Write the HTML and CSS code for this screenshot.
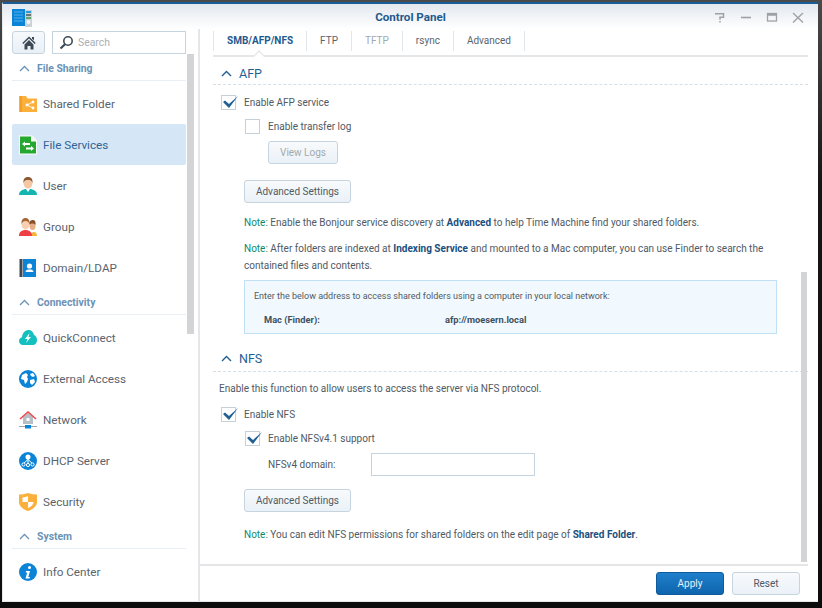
FILE: index.html
```html
<!DOCTYPE html>
<html lang="en">

<head>
    <meta charset="UTF-8">
    <title>Control Panel</title>
    <link rel="stylesheet" href="styles.css">
</head>

<body>
    <main class="window">
        <header class="titlebar">
            <svg class="app__icon" width="20" height="18" viewBox="0 0 20 18">
                <rect x="0" y="0" width="13" height="17" fill="#0b84d8"/>
                <path d="M2 3h9M2 6h9M2 9h9M2 12h9" stroke="#4fb2ee" stroke-width="1"/>
                <rect x="13" y="1" width="7" height="17" fill="#c9d2d8"/>
                <path d="M14 3h5" stroke="#2a9bd8" stroke-width="2"/>
                <path d="M14 6h5" stroke="#4a5a50" stroke-width="1.5"/>
                <path d="M14 9h5" stroke="#3a9a4a" stroke-width="1.5"/>
                <circle cx="16.5" cy="13" r="2" fill="#f2f4f6"/>
            </svg>
            <h1>Control Panel</h1>
            <div class="titlebar__btns">
                <svg width="14" height="14" viewBox="0 0 14 14"><path d="M2 2.700h8.500v3.600h-3.500v2.500" fill="none" stroke="#9ea2a6" stroke-width="1.500"/><path d="M7 10v1.500" stroke="#9ea2a6" stroke-width="1.500"/></svg>
                <svg width="14" height="14" viewBox="0 0 14 14"><path d="M2 6.500h10" stroke="#9ea2a6" stroke-width="1.600"/></svg>
                <svg width="14" height="14" viewBox="0 0 14 14"><rect x="2.500" y="2.500" width="9" height="7.500" fill="none" stroke="#9ea2a6" stroke-width="1.300"/><path d="M2 3.500h10" stroke="#9ea2a6" stroke-width="2.500"/></svg>
                <svg width="14" height="14" viewBox="0 0 14 14"><path d="M2 2l10 9.500M12 2L2 11.500" stroke="#9ea2a6" stroke-width="1.400"/></svg>
            </div>
        </header>

        <div class="body">
            <aside class="sidebar">
                <div class="sidebar__top">
                    <button class="home">
                        <svg width="14" height="14" viewBox="0 0 14 14"><path d="M10 1h2v3.500l-2-2z" fill="#3d4a55"/><path d="M7 .5L.3 7l1 1L7 2.500 12.700 8l1-1z" fill="#3d4a55"/><path d="M2.500 8.500L7 4l4.500 4.500V13.500H8.500V10h-3v3.500h-3z" fill="#3d4a55"/></svg>
                    </button>
                    <div class="search">
                        <svg width="15" height="15" viewBox="0 0 15 15"><circle cx="9" cy="6" r="4.200" fill="none" stroke="#3d4a55" stroke-width="1.600"/><path d="M6 9.200L1.500 13.500" stroke="#3d4a55" stroke-width="2.200"/></svg>
                        <span>Search</span>
                    </div>
                </div>
                <nav class="menu">
                    <div class="menu__group">
                        <svg width="11" height="7" viewBox="0 0 11 7"><path d="M1 6l4.500-4.500L10 6" fill="none" stroke="#6a93b8" stroke-width="1.300"/></svg>
                        <span>File Sharing</span>
                    </div>
                    <a class="menu__item">
                        <svg width="18" height="18" viewBox="0 0 18 18"><path d="M0 1h7l1.500 2.500H18V17H0z" fill="#fbb03b"/><rect x="1" y="1" width="2" height="16" fill="#f59d20"/><circle cx="8" cy="10" r="1.400" fill="#fff"/><circle cx="14" cy="7" r="1.400" fill="#fff"/><circle cx="14" cy="13" r="1.400" fill="#fff"/><path d="M14 7l-6 3 6 3" fill="none" stroke="#fff" stroke-width=".9"/></svg>
                        Shared Folder
                    </a>
                    <a class="menu__item menu__item--on">
                        <svg width="18" height="20" viewBox="0 0 18 20"><path d="M0 .5h13l5 5V19.500H0z" fill="#fff"/><path d="M1 1.500h11l5 5V18.500H1z" fill="#25a82f"/><path d="M12 1.500l5 5h-5z" fill="#fff"/><path d="M3 9l3-2.500V8h5v2H6v1.500zM15 13.500L12 11v1.500H7v2h5V16z" fill="#fff"/></svg>
                        File Services
                    </a>
                    <a class="menu__item">
                        <svg width="18" height="18" viewBox="0 0 18 18"><path d="M0 18c0-4 3-5 6-6h6c3 1 6 2 6 6z" fill="#14b5b0"/><path d="M7 12h4l-2 3z" fill="#fff"/><ellipse cx="9" cy="6" rx="4.500" ry="5.500" fill="#f5c6a2"/><path d="M4.500 6C4 1.500 6.500 0 9 0s5 1.500 4.500 6C13 3.500 11 3 9 3S5 3.500 4.500 6z" fill="#8b5a34"/></svg>
                        User
                    </a>
                    <a class="menu__item">
                        <svg width="18" height="18" viewBox="0 0 18 18"><path d="M12 18c0-3 1-4 3-4s3 2 3 4z" fill="#fbb03b"/><ellipse cx="13.500" cy="8" rx="3" ry="4" fill="#e6ad86"/><path d="M10 7c0-4 2-5 4-5s3 2 2.500 5C15 5 12 5 10 7z" fill="#8b4f2a"/><path d="M0 18c0-4 2-5 5-6h3c3 1 5 2 5 6z" fill="#ee3f45"/><ellipse cx="6.500" cy="6.500" rx="4" ry="5" fill="#f8cfb0"/><path d="M2.500 6C2 1.500 4.500 0 6.500 0s4.500 1.500 4 6C10 4 8 3 6.500 3S3 4 2.500 6z" fill="#a5673a"/></svg>
                        Group
                    </a>
                    <a class="menu__item">
                        <svg width="18" height="18" viewBox="0 0 18 18"><rect x="0.500" y="0" width="3" height="18" fill="#3d4a55"/><rect x="4" y="0" width="13" height="18" fill="#0b84d8"/><circle cx="10.500" cy="7" r="2.600" fill="#fff"/><path d="M6.500 13c0-2 2-2.500 4-2.500s4 .5 4 2.500z" fill="#fff"/></svg>
                        Domain/LDAP
                    </a>
                    <div class="menu__group">
                        <svg width="11" height="7" viewBox="0 0 11 7"><path d="M1 6l4.500-4.500L10 6" fill="none" stroke="#6a93b8" stroke-width="1.300"/></svg>
                        <span>Connectivity</span>
                    </div>
                    <a class="menu__item">
                        <svg width="18" height="16" viewBox="0 0 18 16"><path d="M4 15C1.500 15 0 13 0 11s1.500-3.500 3-3.700C3.500 3 6 0 9.500 0c3 0 5 2 5.500 5 2 .5 3 3 3 5 0 3-2 5-4.500 5z" fill="#14bfc0"/><path d="M10.500 3L6 9h2.500L7 13l5-6H9.500z" fill="#fff"/></svg>
                        QuickConnect
                    </a>
                    <a class="menu__item">
                        <svg width="18" height="18" viewBox="0 0 18 18"><circle cx="9" cy="9" r="9" fill="#0b84d8"/><path d="M3 5l4-2 2 2-1 2 1 2-1 3-2 2-1-4-3-1zM11 4l3-1 2 3-2 1-2-1zM11 10l4-1 1 3-3 3-2-2z" fill="#fff"/></svg>
                        External Access
                    </a>
                    <a class="menu__item">
                        <svg width="18" height="18" viewBox="0 0 18 18"><path d="M4 6l5-4 5 4v7H4z" fill="#b6bfc6"/><path d="M1 8l8-7 8 7" fill="none" stroke="#ee4b50" stroke-width="1.600"/><rect x="7.500" y="7" width="3" height="3" fill="#fff"/><path d="M0 15.500h18" stroke="#9aa8b2"/><rect x="6" y="14" width="6" height="3.500" fill="#0b84d8"/></svg>
                        Network
                    </a>
                    <a class="menu__item">
                        <svg width="18" height="18" viewBox="0 0 18 18"><circle cx="9" cy="9" r="9" fill="#0b84d8"/><circle cx="9" cy="5" r="2.500" fill="#fff"/><path d="M9 5v7M9 7.500L4.500 11.500M9 7.500l4.500 4" stroke="#fff"/><circle cx="4.500" cy="12.500" r="1.600" fill="#0b84d8" stroke="#fff"/><circle cx="9" cy="13" r="1.600" fill="#0b84d8" stroke="#fff"/><circle cx="13.500" cy="12.500" r="1.600" fill="#0b84d8" stroke="#fff"/></svg>
                        DHCP Server
                    </a>
                    <a class="menu__item">
                        <svg width="18" height="18" viewBox="0 0 18 18"><path d="M0 1.500C3 1.500 6 1 9 0c3 1 6 1.500 9 1.500V9c0 4-4 7.500-9 9-5-1.500-9-5-9-9z" fill="#fbb03b"/><path d="M9 3v6H3.500V4.500C5.500 4.300 7 4 9 3zM9 9h5.500c0 2.500-2.500 5-5.500 6z" fill="#fff"/></svg>
                        Security
                    </a>
                    <div class="menu__group">
                        <svg width="11" height="7" viewBox="0 0 11 7"><path d="M1 6l4.500-4.500L10 6" fill="none" stroke="#6a93b8" stroke-width="1.300"/></svg>
                        <span>System</span>
                    </div>
                    <a class="menu__item">
                        <svg width="18" height="18" viewBox="0 0 18 18"><circle cx="9" cy="9" r="9" fill="#0b84d8"/><circle cx="10.500" cy="4.500" r="1.500" fill="#fff"/><path d="M7 8h4l-1.700 6H11l-.5 1.500H6.500L8.200 9.500H6.700z" fill="#fff"/></svg>
                        Info Center
                    </a>
                </nav>
                <div class="sidebar__scroll"></div>
            </aside>

            <section class="main">
                <div class="tabs">
                    <a class="tab tab--on">SMB/AFP/NFS</a>
                    <a class="tab">FTP</a>
                    <a class="tab tab--off">TFTP</a>
                    <a class="tab">rsync</a>
                    <a class="tab">Advanced</a>
                </div>

                <div class="content">
                    <div class="sec__head">
                        <svg width="11" height="7" viewBox="0 0 11 7"><path d="M1 6l4.500-4.500L10 6" fill="none" stroke="#1f5f94" stroke-width="1.400"/></svg>
                        <h2>AFP</h2>
                    </div>
                    <div class="sec sec--afp">
                        <label class="check"><i class="box box--on"></i>Enable AFP service</label>
                        <label class="check check--sub"><i class="box"></i>Enable transfer log</label>
                        <button class="btn btn--off btn--logs">View Logs</button>
                        <button class="btn btn--adv">Advanced Settings</button>
                        <p class="note"><em>Note:</em> Enable the Bonjour service discovery at <b>Advanced</b> to help Time Machine find your shared folders.</p>
                        <p class="note note--two"><em>Note:</em> After folders are indexed at <b>Indexing Service</b> and mounted to a Mac computer, you can use Finder to search the contained files and contents.</p>
                        <div class="addr">
                            <p>Enter the below address to access shared folders using a computer in your local network:</p>
                            <div class="addr__row"><b>Mac (Finder):</b><b>afp://moesern.local</b></div>
                        </div>
                    </div>

                    <div class="sec__head sec__head--nfs">
                        <svg width="11" height="7" viewBox="0 0 11 7"><path d="M1 6l4.500-4.500L10 6" fill="none" stroke="#1f5f94" stroke-width="1.400"/></svg>
                        <h2>NFS</h2>
                    </div>
                    <div class="sec sec--nfs">
                        <p class="desc">Enable this function to allow users to access the server via NFS protocol.</p>
                        <label class="check"><i class="box box--on"></i>Enable NFS</label>
                        <label class="check check--sub"><i class="box box--on"></i>Enable NFSv4.1 support</label>
                        <div class="field"><span>NFSv4 domain:</span><input type="text"></div>
                        <button class="btn btn--adv">Advanced Settings</button>
                        <p class="note"><em>Note:</em> You can edit NFS permissions for shared folders on the edit page of <b>Shared Folder</b>.</p>
                    </div>
                </div>

                <div class="content__scroll"></div>

                <footer class="footer">
                    <button class="btn btn--apply">Apply</button>
                    <button class="btn btn--reset">Reset</button>
                </footer>
            </section>
        </div>
    </main>
</body>

</html>
```

FILE: styles.css
```css
* {
    box-sizing: border-box;
}

body {
    margin: 0;
    height: 608px;
    overflow: hidden;
    padding: 2px 4px 0 2px;
    background: linear-gradient(#4a4a4a, #161616 30%, #0c0c0c);
    font-family: Roboto, "Liberation Sans", sans-serif;
    font-size: 10px;
    color: #505a64;
}

.window {
    height: 600px;
    display: flex;
    flex-direction: column;
    background: #fff;
    border-top: 2px solid #1a5c96;
    border-left: 1px solid #e6e9ec;
    border-bottom: 1px solid #e6e9ec;
}

.titlebar {
    flex: none;
    height: 25px;
    padding-top: 1px;
    display: flex;
    align-items: center;
    justify-content: center;
    position: relative;
    background: linear-gradient(#e3e8ef, #fff);
}

.titlebar h1 {
    margin: 0;
    font-size: 11.6px;
    font-weight: 700;
    color: #1f5a8e;
}

.app__icon {
    position: absolute;
    left: 9px;
    top: 5px;
}

.titlebar__btns {
    position: absolute;
    right: 13px;
    top: 7px;
    display: flex;
    gap: 12px;
}

.body {
    flex: 1;
    display: flex;
    min-height: 0;
}

.sidebar {
    flex: none;
    width: 197px;
    padding-left: 9px;
    border-right: 2px solid #e4e6e9;
    position: relative;
}

.sidebar__top {
    display: flex;
    gap: 7px;
    height: 26px;
    width: 174px;
    padding-top: 2px;
}

.home {
    width: 33px;
    height: 23px;
    padding: 0;
    display: flex;
    align-items: center;
    justify-content: center;
    background: linear-gradient(#f6f9fc, #e8f0f6);
    border: 1px solid #c6d4df;
    border-radius: 3px;
}

.search {
    flex: 1;
    height: 23px;
    display: flex;
    align-items: center;
    gap: 4px;
    padding-left: 6px;
    border: 1px solid #c6d4df;
    color: #a9b0b6;
    font-size: 10.4px;
}

.menu {
    width: 174px;
}

.menu__group {
    height: 26px;
    margin: 1px 0 2px;
    display: flex;
    align-items: center;
    gap: 7px;
    padding: 1px 0 0 7px;
    border-bottom: 1px solid #e9eff5;
    color: #6a93b8;
    font-size: 10.4px;
    font-weight: 700;
}

.menu__group:first-child {
    margin-top: 0;
}

.menu__item {
    height: 41px;
    display: flex;
    align-items: center;
    padding-left: 7px;
    font-size: 11.7px;
    color: #5a646e;
    border-radius: 2px;
}

.menu__item svg {
    flex: none;
    margin-right: 6px;
}

.menu__item--on {
    background: #d5e6f7;
    color: #2f6494;
}

.sidebar__scroll {
    position: absolute;
    left: 184px;
    top: 25px;
    width: 7px;
    height: 280px;
    background: #d2d4d6;
}

.main {
    flex: 1;
    min-width: 0;
    position: relative;
    display: flex;
    flex-direction: column;
}

.tabs {
    flex: none;
    display: flex;
    height: 28px;
    margin: 0 10px 0 13px;
    padding-top: 2px;
    border-bottom: 2px solid #e4e6e8;
    position: relative;
}

.tabs::after {
    content: "";
    position: absolute;
    left: 42px;
    top: 23px;
    width: 7px;
    height: 7px;
    background: #fff;
    border-top: 1px solid #e0e2e4;
    border-left: 1px solid #e0e2e4;
    transform: rotate(45deg);
}

.tab {
    height: 20px;
    padding: 0 13px;
    line-height: 20px;
    color: #5a646e;
    border-right: 1px solid #dfe6ec;
}

.tab:first-child {
    border-left: 1px solid #dfe6ec;
}

.tab--on {
    font-weight: 700;
    color: #1f5a8e;
}

.tab--off {
    color: #a3a9ae;
}

.content {
    flex: 1;
    margin-right: 10px;
    min-height: 0;
    overflow: hidden;
}

.sec__head {
    height: 28px;
    margin-left: 13px;
    padding: 5px 0 0 8px;
    display: flex;
    align-items: center;
    gap: 7px;
    border-bottom: 1px dashed #d4dfe8;
}

.sec__head--nfs {
    height: 32px;
    margin-top: 6px;
}

.sec__head h2 {
    margin: 0;
    font-size: 12.5px;
    font-weight: 400;
    color: #1f5f94;
}

.sec {
    display: flex;
    flex-direction: column;
    align-items: flex-start;
    padding-left: 21px;
}

.sec--afp {
    padding-top: 10px;
}

.sec--nfs {
    padding-top: 11px;
}

.check {
    display: flex;
    align-items: center;
    gap: 8px;
    height: 15px;
    margin-bottom: 9px;
}

.check--sub {
    margin-left: 24px;
    margin-bottom: 7px;
}

.box {
    flex: none;
    width: 15px;
    height: 15px;
    border: 1px solid #c6d0d8;
    position: relative;
}

.box--on::after {
    content: "";
    position: absolute;
    left: 0;
    top: 0;
    width: 17px;
    height: 13px;
    background: #1f5f94;
    clip-path: polygon(1px 6px, 3px 4.5px, 7px 8px, 16px 0, 7px 12px);
}

.btn {
    font: inherit;
    color: #505a64;
    background: linear-gradient(#f8fafc, #eaf1f7);
    border: 1px solid #c6d4df;
    border-radius: 3px;
    padding: 0;
}

.btn--adv {
    width: 107px;
    height: 23px;
    margin-left: 23px;
}

.btn--logs {
    width: 70px;
    height: 23px;
    margin: 0 0 16px 47px;
}

.btn--off {
    color: #a3a9ae;
}

.note {
    margin: 11px 0 0 23px;
    width: 533px;
    line-height: 17px;
}

.note--two {
    margin-top: 9px;
}

.sec--nfs .note {
    margin-top: 14px;
}

.note em {
    font-style: normal;
    color: #0d8a6a;
}

.note b {
    color: #1a4f80;
}

.addr {
    width: 533px;
    height: 54px;
    margin: 6px 0 0 23px;
    padding: 9px;
    background: #f1f9fe;
    border: 1px solid #bfe0f5;
    font-size: 9px;
}

.addr p {
    margin: 0;
    line-height: 12px;
}

.addr__row {
    display: flex;
    margin: 12px 0 0 10px;
    font-size: 9.3px;
    color: #40505e;
}

.addr__row b:first-child {
    width: 181px;
}

.desc {
    margin: 0 0 12px -2px;
    line-height: 12px;
}

.field {
    display: flex;
    align-items: center;
    margin: 0 0 13px 47px;
    height: 23px;
}

.field span {
    width: 103px;
}

.field input {
    width: 164px;
    height: 23px;
    border: 1px solid #c6d4df;
}

.content__scroll {
    position: absolute;
    left: 601px;
    top: 243px;
    width: 6px;
    height: 290px;
    background: #d2d4d6;
}

.footer {
    flex: none;
    height: 37px;
    margin-right: 10px;
    padding: 6px 8px 0 0;
    display: flex;
    justify-content: flex-end;
    gap: 8px;
    border-top: 2px solid #e4e6e8;
}

.btn--apply,
.btn--reset {
    width: 68px;
    height: 23px;
}

.btn--apply {
    color: #e6f2fb;
    background: linear-gradient(#1f7fcb, #0e65ad);
    border-color: #0e5a9c;
}
```
